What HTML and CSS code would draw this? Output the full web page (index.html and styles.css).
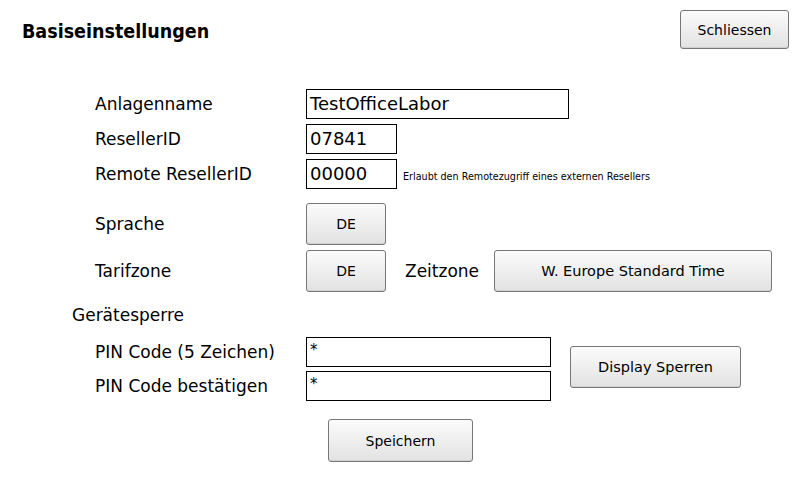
FILE: index.html
```html
<!DOCTYPE html>
<html lang="de">
<head>
<meta charset="utf-8">
<title>Basiseinstellungen</title>
<link rel="stylesheet" href="styles.css">
</head>
<body>
<div class="page">
  <div class="header">
    <h1 class="title">Basiseinstellungen</h1>
    <button class="btn btn-close">Schliessen</button>
  </div>

  <div class="form">
    <div class="row row-text">
      <span class="label">Anlagenname</span>
      <div class="field field-wide">TestOfficeLabor</div>
    </div>
    <div class="row row-text">
      <span class="label">ResellerID</span>
      <div class="field field-short">07841</div>
    </div>
    <div class="row row-text">
      <span class="label">Remote ResellerID</span>
      <div class="field field-short">00000</div>
      <span class="note">Erlaubt den Remotezugriff eines externen Resellers</span>
    </div>

    <div class="row row-btn row-first-btn">
      <span class="label">Sprache</span>
      <button class="btn btn-small">DE</button>
    </div>
    <div class="row row-btn">
      <span class="label">Tarifzone</span>
      <button class="btn btn-small">DE</button>
      <span class="label-inline">Zeitzone</span>
      <button class="btn btn-zone">W. Europe Standard Time</button>
    </div>

    <div class="section-title">Gerätesperre</div>

    <div class="pin-block">
      <div class="pin-rows">
        <div class="row row-text row-pin">
          <span class="label">PIN Code (5 Zeichen)</span>
          <div class="field field-pin">*</div>
        </div>
        <div class="row row-text row-pin">
          <span class="label">PIN Code bestätigen</span>
          <div class="field field-pin">*</div>
        </div>
      </div>
      <button class="btn btn-lock">Display Sperren</button>
    </div>

    <div class="save-row">
      <button class="btn btn-save">Speichern</button>
    </div>
  </div>
</div>
</body>
</html>
```

FILE: styles.css
```css
* {
  box-sizing: border-box;
}

html, body {
  margin: 0;
  padding: 0;
  background: #ffffff;
}

body {
  width: 800px;
  height: 480px;
  overflow: hidden;
  font-family: "DejaVu Sans", "Liberation Sans", sans-serif;
  color: #000;
}

.page {
  padding: 10px 11px 0 0;
}

.header {
  display: flex;
  justify-content: space-between;
  align-items: center;
  height: 39px;
}

.title {
  margin: 3px 0 0 22px;
  font-family: "DejaVu Sans Condensed", "DejaVu Sans", sans-serif;
  font-size: 19.5px;
  font-weight: bold;
}

.btn {
  font-family: "DejaVu Sans", "Liberation Sans", sans-serif;
  font-size: 14px;
  color: #000;
  border: 1px solid #777;
  border-radius: 3px;
  background: linear-gradient(#fbfbfb, #ececec 60%, #e2e2e2);
  padding: 0;
  margin: 0;
  box-shadow: inset 0 -1px 0 #d0d0d0;
}

.btn-close {
  width: 109px;
  height: 39px;
}

.form {
  display: flex;
  flex-direction: column;
  margin-top: 40px;
  padding-left: 72px;
}

.row {
  display: flex;
  align-items: center;
  margin-left: 23px;
}

.row-text {
  height: 30px;
  margin-bottom: 5px;
}

.label {
  width: 211px;
  font-size: 17px;
  flex-shrink: 0;
}

.field {
  height: 30px;
  border: 1px solid #000;
  font-size: 18px;
  line-height: 27px;
  padding-left: 3px;
  white-space: nowrap;
  overflow: hidden;
}

.field-wide {
  width: 263px;
}

.field-short {
  width: 91px;
}

.field-pin {
  width: 245px;
  font-size: 15px;
  line-height: 24px;
}

.note {
  margin-left: 6px;
  margin-top: 5px;
  font-size: 9.6px;
}

.row-btn {
  height: 42px;
  margin-bottom: 5px;
}

.row-first-btn {
  margin-top: 9px;
}

.btn-small {
  width: 80px;
  height: 42px;
}

.label-inline {
  width: 89px;
  margin-left: 19px;
  font-size: 17px;
}

.btn-zone {
  width: 278px;
  height: 42px;
  font-size: 14.5px;
}

.section-title {
  height: 24px;
  margin-top: 6px;
  font-size: 17px;
  line-height: 24px;
}

.pin-block {
  display: flex;
  align-items: flex-start;
  margin-top: 10px;
}

.row-pin {
  margin-bottom: 4px;
}

.btn-lock {
  width: 171px;
  height: 42px;
  margin-left: 19px;
  margin-top: 9px;
  font-size: 14.5px;
}

.save-row {
  margin-top: 14px;
  padding-left: 256px;
}

.btn-save {
  width: 145px;
  height: 43px;
}
```
